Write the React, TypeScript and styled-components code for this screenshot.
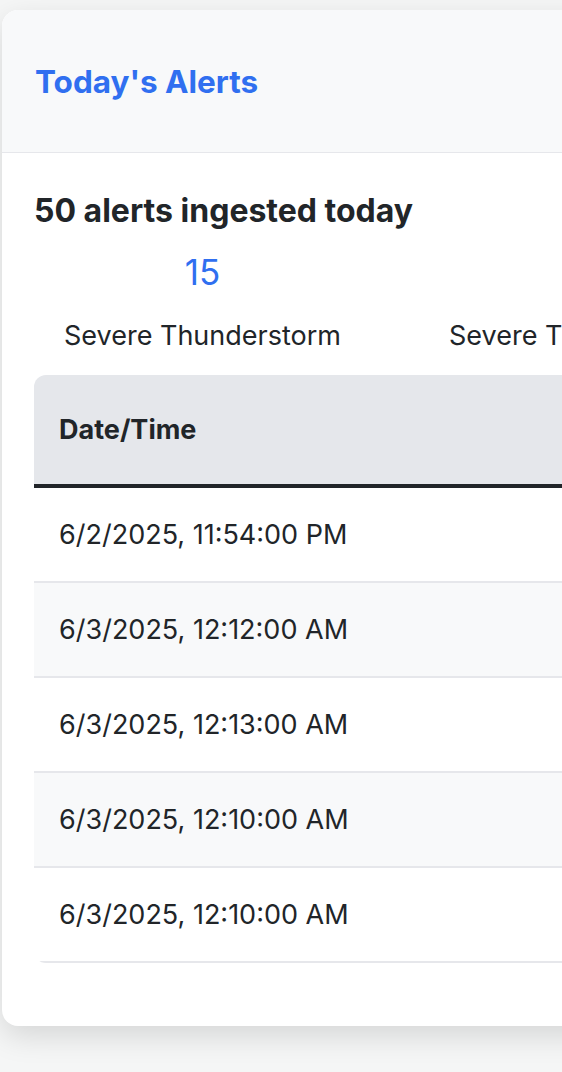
import styled, { createGlobalStyle } from 'styled-components'

const GlobalStyle = createGlobalStyle`
  html, body {
    margin: 0;
    padding: 0;
    background: #f5f6f6;
    overflow: hidden;
  }
  body {
    font-family: Inter, 'Noto Sans', sans-serif;
    color: #212529;
  }
`

const colors = {
  primary: '#306ff0',
  text: '#212529',
  border: '#e6e7eb',
  headerBg: '#f8f9fa',
  theadBg: '#e5e7eb',
  stripe: '#f8f9fa',
}

interface Stat {
  count: number
  label: string
}

interface Alert {
  time: string
  event: string
  area: string
}

const stats: Stat[] = [
  { count: 15, label: 'Severe Thunderstorm' },
  { count: 12, label: 'Severe Thunderstorm Warning' },
  { count: 9, label: 'Flood Advisory' },
]

const alerts: Alert[] = [
  { time: '6/2/2025, 11:54:00 PM', event: 'Severe Thunderstorm Warning', area: 'Harris, TX' },
  { time: '6/3/2025, 12:12:00 AM', event: 'Flood Advisory', area: 'Travis, TX' },
  { time: '6/3/2025, 12:13:00 AM', event: 'Severe Thunderstorm Watch', area: 'Dallas, TX' },
  { time: '6/3/2025, 12:10:00 AM', event: 'Flash Flood Warning', area: 'Bexar, TX' },
  { time: '6/3/2025, 12:10:00 AM', event: 'Special Weather Statement', area: 'Collin, TX' },
]

const App = () => {
  return (
    <>
      <GlobalStyle />
      <Page>
        <Card>
          <CardHeader>
            <Title>Today's Alerts</Title>
          </CardHeader>
          <CardBody>
            <Summary>50 alerts ingested today</Summary>
            <StatRow>
              {stats.map((s) => (
                <StatItem key={s.label}>
                  <StatCount>{s.count}</StatCount>
                  <StatLabel>{s.label}</StatLabel>
                </StatItem>
              ))}
            </StatRow>
            <TableWrap>
              <Table>
                <thead>
                  <tr>
                    <Th $wide>Date/Time</Th>
                    <Th>Event</Th>
                    <Th>Area</Th>
                  </tr>
                </thead>
                <tbody>
                  {alerts.map((a, i) => (
                    <Tr key={i} $striped={i % 2 === 1}>
                      <Td>{a.time}</Td>
                      <Td>{a.event}</Td>
                      <Td>{a.area}</Td>
                    </Tr>
                  ))}
                </tbody>
              </Table>
            </TableWrap>
          </CardBody>
        </Card>
      </Page>
    </>
  )
}

export default App

const Page = styled.div`
  padding: 10px 0 40px 2px;
`
const Card = styled.div`
  width: 1500px;
  background: #fff;
  border-radius: 16px;
  overflow: hidden;
  box-shadow: 0 10px 30px rgba(0, 0, 0, 0.13);
`
const CardHeader = styled.div`
  display: flex;
  align-items: center;
  height: 142px;
  padding: 0 33px;
  background: ${colors.headerBg};
  border-bottom: 1px solid ${colors.border};
`
const Title = styled.h2`
  margin: 0;
  font-size: 31.5px;
  font-weight: 700;
  color: ${colors.primary};
`
const CardBody = styled.div`
  padding: 39px 32px 63px;
`
const Summary = styled.h3`
  margin: 0;
  font-size: 32px;
  font-weight: 700;
  line-height: 1.2;
`
const StatRow = styled.div`
  display: flex;
  gap: 48px;
  margin-top: 21px;
`
const StatItem = styled.div`
  display: flex;
  flex-direction: column;
  align-items: center;
  padding: 0 30px;
`
const StatCount = styled.div`
  font-size: 35px;
  line-height: 42px;
  color: ${colors.primary};
`
const StatLabel = styled.div`
  margin-top: 27px;
  font-size: 27px;
  line-height: 32px;
  white-space: nowrap;
`
const TableWrap = styled.div`
  margin-top: 23px;
  border-radius: 12px;
  overflow: hidden;
`
const Table = styled.table`
  width: 100%;
  border-collapse: collapse;
  font-size: 27px;
`
const Th = styled.th<{ $wide?: boolean }>`
  width: ${(p) => (p.$wide ? '560px' : 'auto')};
  padding: 34.5px 25px;
  text-align: left;
  font-weight: 700;
  line-height: 40px;
  background: ${colors.theadBg};
  border-bottom: 4px solid ${colors.text};
`
const Tr = styled.tr<{ $striped: boolean }>`
  background: ${(p) => (p.$striped ? colors.stripe : '#fff')};
  border-bottom: 2px solid ${colors.border};
`
const Td = styled.td`
  padding: 26.5px 25px;
  line-height: 40px;
  white-space: nowrap;
`
